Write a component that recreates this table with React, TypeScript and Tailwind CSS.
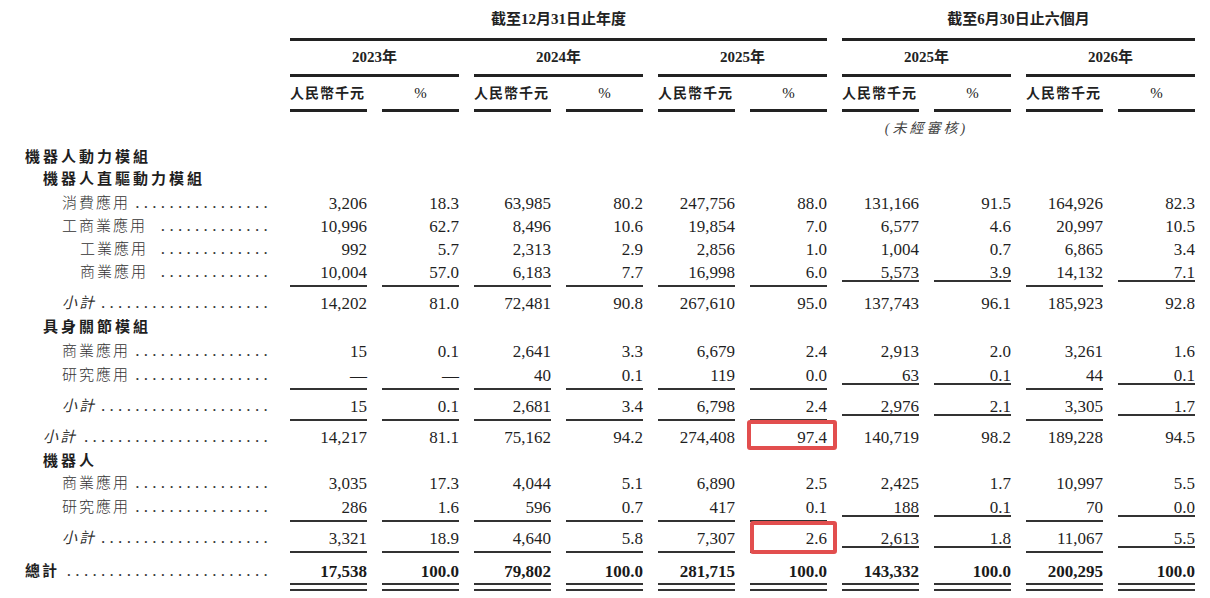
import React from "react";

type Kind = "head" | "normal" | "italic" | "total";
type Row = {
  label: string;
  indent: 25 | 43 | 62 | 80;
  kind: Kind;
  h: string;
  space?: boolean;
  values?: string[];
  line?: "single" | "double";
  box?: "a" | "b";
};

const INDENT: Record<number, string> = {
  25: "pl-[25px]",
  43: "pl-[43px]",
  62: "pl-[62px]",
  80: "pl-[80px]",
};

const rows: Row[] = [
  { label: "機器人動力模組", indent: 25, kind: "head", h: "h-[22px]" },
  { label: "機器人直驅動力模組", indent: 43, kind: "head", h: "h-[24px]" },
  { label: "消費應用", indent: 62, kind: "normal", h: "h-[23px]", values: ["3,206", "18.3", "63,985", "80.2", "247,756", "88.0", "131,166", "91.5", "164,926", "82.3"] },
  { label: "工商業應用", indent: 62, kind: "normal", h: "h-[23px]", space: true, values: ["10,996", "62.7", "8,496", "10.6", "19,854", "7.0", "6,577", "4.6", "20,997", "10.5"] },
  { label: "工業應用", indent: 80, kind: "normal", h: "h-[23px]", space: true, values: ["992", "5.7", "2,313", "2.9", "2,856", "1.0", "1,004", "0.7", "6,865", "3.4"] },
  { label: "商業應用", indent: 80, kind: "normal", h: "h-[31px]", space: true, line: "single", values: ["10,004", "57.0", "6,183", "7.7", "16,998", "6.0", "5,573", "3.9", "14,132", "7.1"] },
  { label: "小計", indent: 62, kind: "italic", h: "h-[24px]", values: ["14,202", "81.0", "72,481", "90.8", "267,610", "95.0", "137,743", "96.1", "185,923", "92.8"] },
  { label: "具身關節模組", indent: 43, kind: "head", h: "h-[24px]" },
  { label: "商業應用", indent: 62, kind: "normal", h: "h-[24px]", values: ["15", "0.1", "2,641", "3.3", "6,679", "2.4", "2,913", "2.0", "3,261", "1.6"] },
  { label: "研究應用", indent: 62, kind: "normal", h: "h-[31px]", line: "single", values: ["—", "—", "40", "0.1", "119", "0.0", "63", "0.1", "44", "0.1"] },
  { label: "小計", indent: 62, kind: "italic", h: "h-[31px]", line: "single", values: ["15", "0.1", "2,681", "3.4", "6,798", "2.4", "2,976", "2.1", "3,305", "1.7"] },
  { label: "小計", indent: 43, kind: "italic", h: "h-[24px]", box: "a", values: ["14,217", "81.1", "75,162", "94.2", "274,408", "97.4", "140,719", "98.2", "189,228", "94.5"] },
  { label: "機器人", indent: 43, kind: "head", h: "h-[22px]" },
  { label: "商業應用", indent: 62, kind: "normal", h: "h-[24px]", values: ["3,035", "17.3", "4,044", "5.1", "6,890", "2.5", "2,425", "1.7", "10,997", "5.5"] },
  { label: "研究應用", indent: 62, kind: "normal", h: "h-[31px]", line: "single", values: ["286", "1.6", "596", "0.7", "417", "0.1", "188", "0.1", "70", "0.0"] },
  { label: "小計", indent: 62, kind: "italic", h: "h-[33px]", line: "single", box: "b", values: ["3,321", "18.9", "4,640", "5.8", "7,307", "2.6", "2,613", "1.8", "11,067", "5.5"] },
  { label: "總計", indent: 25, kind: "total", h: "h-[38px]", space: true, line: "double", values: ["17,538", "100.0", "79,802", "100.0", "281,715", "100.0", "143,332", "100.0", "200,295", "100.0"] },
];

const GRID = "grid grid-cols-[275px_repeat(10,77px)] gap-x-[15px]";
const TIGHT = [6, 7, 9];

function dotCount(row: Row) {
  const pitch = row.kind === "head" ? 18 : 17;
  const avail = 272 - row.indent - row.label.length * pitch - (row.space ? 7 : 0);
  return Math.max(0, Math.floor(avail / 8.55));
}

function Leader({ row }: { row: Row }) {
  return (
    <div className="flex flex-1 justify-end">
      <span className="whitespace-nowrap font-['Liberation_Serif',serif] text-[17px] font-normal not-italic tracking-[4.3px] text-[#333]">
        {".".repeat(dotCount(row))}
      </span>
    </div>
  );
}

function Label({ row }: { row: Row }) {
  const textCls =
    row.kind === "head"
      ? "font-bold tracking-[3px] text-[#1e1e1e]"
      : row.kind === "total"
      ? "font-bold tracking-[2px] text-[#1e1e1e]"
      : row.kind === "italic"
      ? "italic tracking-[2px] text-[#333]"
      : "font-light tracking-[2px] text-[#333]";
  return (
    <div className={`flex h-[23px] items-center pr-[3px] ${INDENT[row.indent]}`}>
      <span className={`whitespace-nowrap text-[15px] leading-[23px] ${textCls}`}>{row.label}</span>
      {row.values && <Leader row={row} />}
    </div>
  );
}

function Cell({ v, i, row }: { v: string; i: number; row: Row }) {
  const tight = TIGHT.includes(i);
  return (
    <div className="relative flex flex-col">
      <div
        className={
          row.kind === "total"
            ? "h-[23px] text-right text-[17px] font-bold leading-[23px] text-[#1a1a1a]"
            : "h-[23px] text-right text-[17px] leading-[23px] text-[#1f1f1f]"
        }
      >
        {v}
      </div>
      {row.line === "single" && (
        <div className={tight ? "mt-[-4px] h-[2px] bg-[#333]" : "mt-[1px] h-[2px] bg-[#333]"} />
      )}
      {row.line === "double" && (
        <>
          <div className="mt-[0px] h-[2px] bg-[#333]" />
          <div className="mt-[4px] h-[2px] bg-[#333]" />
        </>
      )}
      {row.box === "a" && i === 5 && (
        <div className="absolute -left-[3px] -right-[10px] -top-[6px] h-[30px] rounded-[3px] border-[4px] border-[#e24e4e]" />
      )}
      {row.box === "b" && i === 5 && (
        <div className="absolute left-[0px] -right-[10px] -top-[6px] h-[33px] rounded-[3px] border-[4px] border-[#e24e4e]" />
      )}
    </div>
  );
}

const years = ["2023年", "2024年", "2025年", "2025年", "2026年"];
const yearCols = ["col-[2/4]", "col-[4/6]", "col-[6/8]", "col-[8/10]", "col-[10/12]"];

export default function App() {
  return (
    <div className="h-[598px] w-[1210px] overflow-hidden bg-white font-['Liberation_Serif','Noto_Sans_CJK_TC',serif] text-[#222]">
      {/* Header */}
      <div className={GRID}>
        <div className="col-[2/8] flex h-[41px] items-center justify-center border-b-[3px] border-[#222] text-[15px] font-bold">
          截至12月31日止年度
        </div>
        <div className="col-[8/12] flex h-[41px] items-center justify-center border-b-[3px] border-[#222] text-[15px] font-bold">
          截至6月30日止六個月
        </div>
      </div>
      <div className={GRID}>
        {years.map((y, i) => (
          <div
            key={i}
            className={`${yearCols[i]} flex h-[36px] items-center justify-center border-b-[3px] border-[#222] text-[15px] font-bold`}
          >
            {y}
          </div>
        ))}
      </div>
      <div className={GRID}>
        <div />
        {Array.from({ length: 10 }).map((_, i) =>
          i % 2 === 0 ? (
            <div
              key={i}
              className="flex h-[35px] items-center whitespace-nowrap border-b-[3px] border-[#222] text-[14px] font-bold tracking-[1px]"
            >
              人民幣千元
            </div>
          ) : (
            <div key={i} className="flex h-[35px] items-center justify-center border-b-[3px] border-[#222] text-[15px]">
              %
            </div>
          )
        )}
      </div>
      <div className={GRID}>
        <div className="col-[8/10] flex h-[33.5px] items-center justify-center text-[14px] italic tracking-[3px] text-[#444]">
          (未經審核)
        </div>
      </div>

      {/* Body */}
      {rows.map((row, r) => (
        <div key={r} className={`${GRID} ${row.h}`}>
          <Label row={row} />
          {row.values?.map((v, i) => <Cell key={i} v={v} i={i} row={row} />)}
        </div>
      ))}
    </div>
  );
}
